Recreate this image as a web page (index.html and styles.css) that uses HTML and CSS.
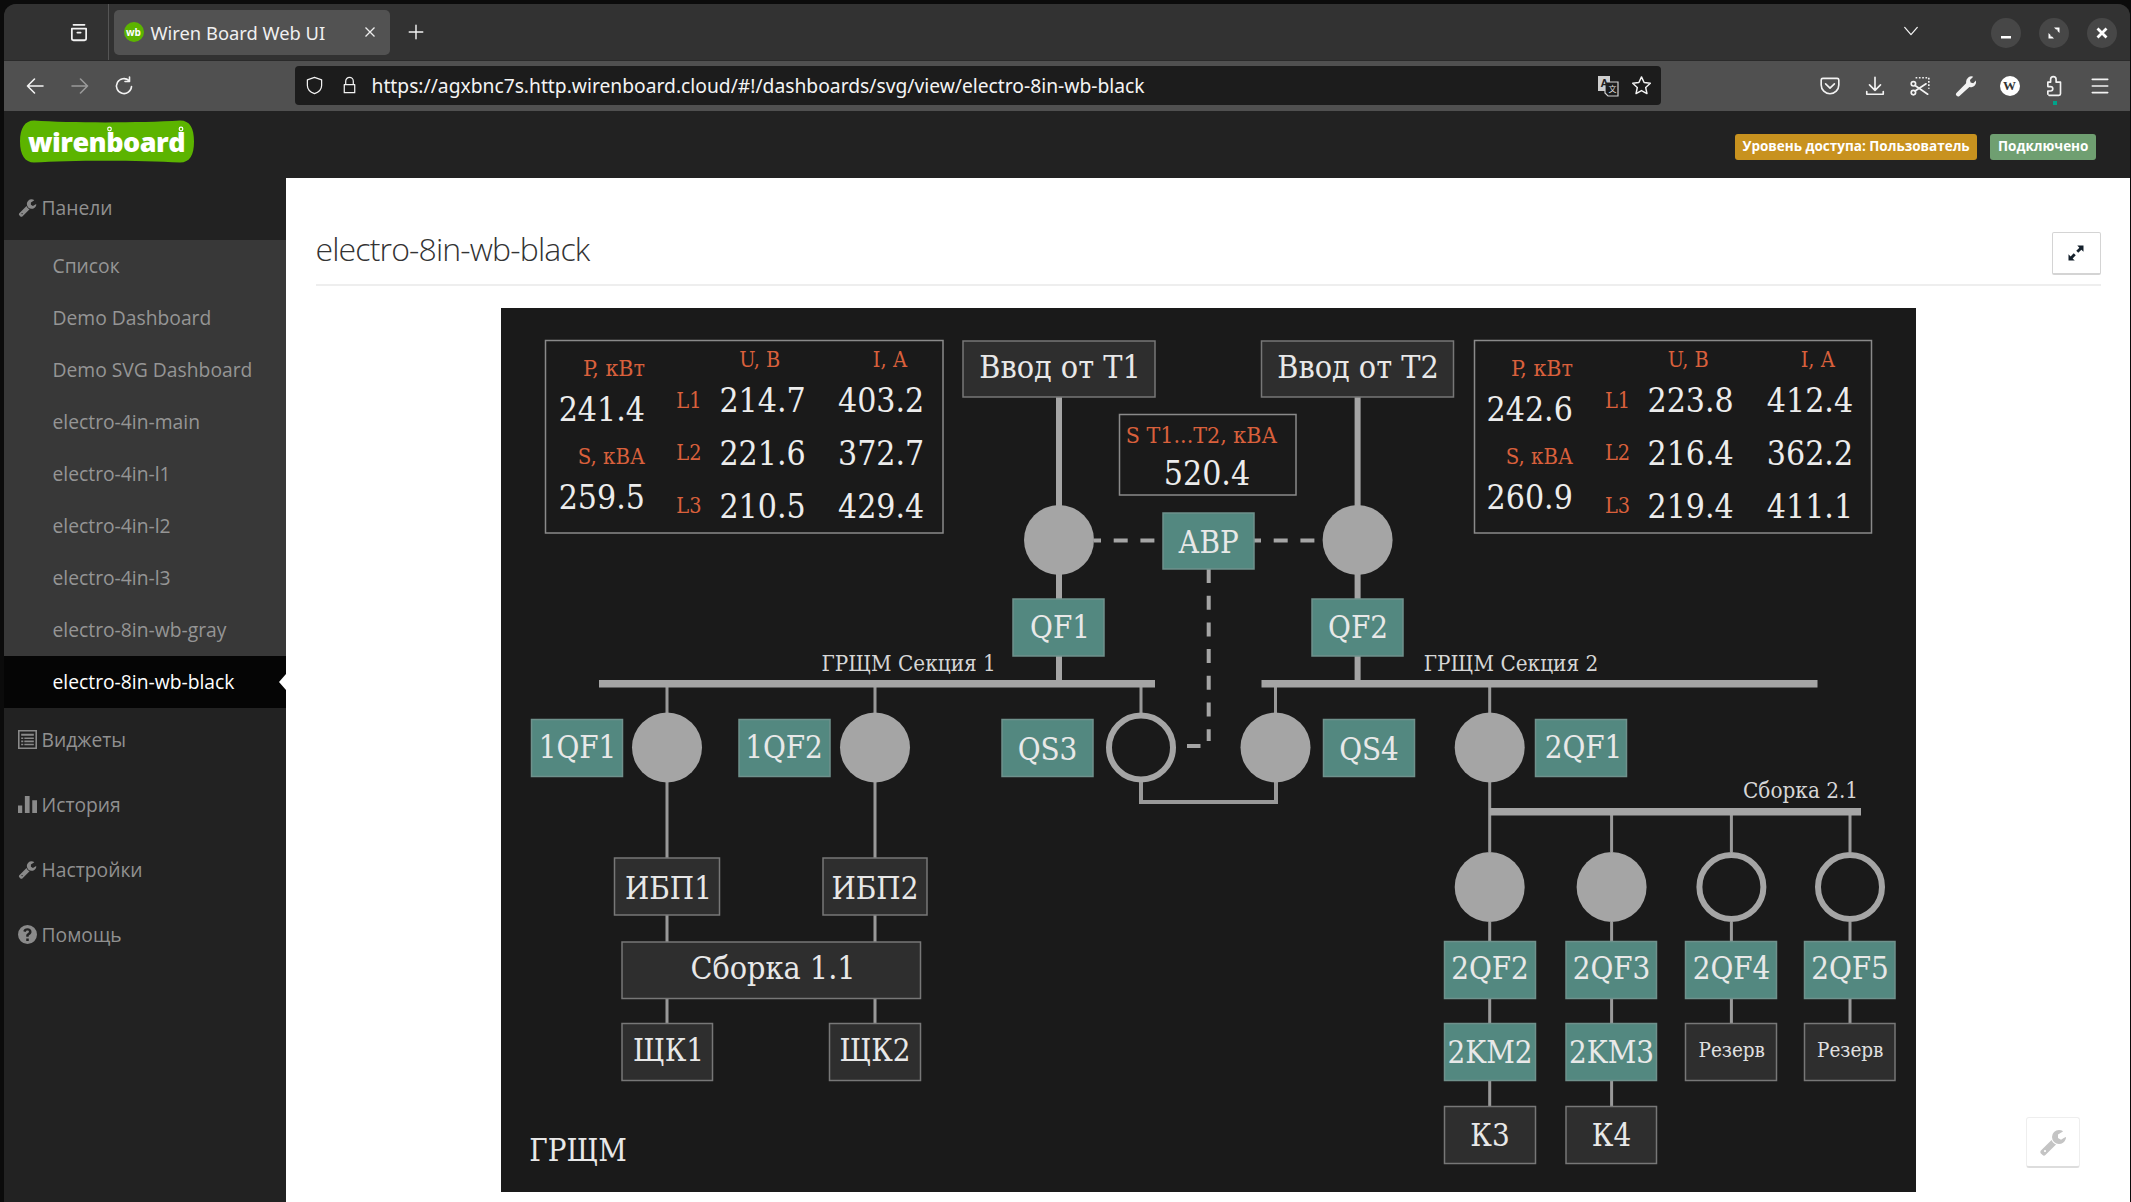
FILE: index.html
```html
<!DOCTYPE html>
<html lang="ru">
<head>
<meta charset="utf-8">
<title>Wiren Board Web UI</title>
<link rel="stylesheet" href="styles.css">
</head>
<body>
<svg class="defs" width="0" height="0" aria-hidden="true">
  <symbol id="wrench" viewBox="0 0 1792 1792"><path fill="currentColor" d="M448 1472q0-26-19-45t-45-19-45 19-19 45 19 45 45 19 45-19 19-45zm644-420l-682 682q-37 37-90 37-52 0-91-37l-106-108q-38-36-38-90 0-53 38-91l681-681q39 98 114.5 173.5t173.5 114.5zm634-435q0 39-23 106-47 134-164.5 217.5t-258.5 83.5q-185 0-316.5-131.5t-131.5-316.5 131.5-316.5 316.5-131.5q58 0 121.5 16.5t107.5 46.5q16 11 16 28t-16 28l-293 169v224l193 107q5-3 79-48.5t135.5-81 70.5-35.5q15 0 23.5 10t8.5 25z"/></symbol>
</svg>
<div class="window">
  <div class="titlebar">
    <div class="tabs-btn">
      <svg class="ff" viewBox="0 0 20 20"><path d="M5 3.500h10M3.500 7h13v9a1.500 1.500 0 0 1-1.500 1.500h-10a1.500 1.500 0 0 1-1.500-1.500zM8.500 10.500h3"/></svg>
    </div>
    <div class="tab">
      <span class="favicon">wb</span>
      <span class="tab-title">Wiren Board Web UI</span>
      <svg class="tab-x" viewBox="0 0 12 12"><path d="M1.500 1.500l9 9M10.500 1.500l-9 9"/></svg>
    </div>
    <svg class="ff plus" viewBox="0 0 20 20"><path d="M10 2.500v15M2.500 10h15"/></svg>
    <div class="spacer"></div>
    <svg class="ff chevron" viewBox="0 0 20 20"><path d="M3 6l7 8 7-8"/></svg>
    <div class="winbtns">
      <div class="winbtn"><svg viewBox="0 0 14 14"><path class="wb-solid" d="M2 10h10v2.500H2z"/></svg></div>
      <div class="winbtn"><svg viewBox="0 0 14 14"><path class="wb-solid" d="M7 1.500h5.500V7L10.500 5V3.500H9zM1.500 7L3.500 9v1.500H5L7 12.500H1.500z"/></svg></div>
      <div class="winbtn"><svg viewBox="0 0 14 14"><path class="wb-cross" d="M2.500 2.500l9 9M11.500 2.500l-9 9"/></svg></div>
    </div>
  </div>
  <div class="toolbar">
    <svg class="ff nav" viewBox="0 0 20 20"><path d="M18 10H2.500M9.500 3l-7 7 7 7"/></svg>
    <svg class="ff nav dim" viewBox="0 0 20 20"><path d="M2 10h15.500M10.500 3l7 7-7 7"/></svg>
    <svg class="ff nav" viewBox="0 0 20 20"><path d="M17.500 10.500a7.500 7.500 0 1 1-2.500-6M15.500 1v4.500H11"/></svg>
    <div class="urlbar">
      <svg class="ff small" viewBox="0 0 20 20"><path d="M10 1.500l7.500 2.500v6c0 4-3 7-7.500 8.500C5.500 17 2.500 14 2.500 10V4z"/></svg>
      <svg class="ff small lock" viewBox="0 0 20 20"><path d="M6 9V5.500a4 4 0 0 1 8 0V9M4.500 9h11v8.500h-11z"/></svg>
      <span class="url">https://agxbnc7s.http.wirenboard.cloud/#!/dashboards/svg/view/electro-8in-wb-black</span>
      <svg class="translate" viewBox="0 0 22 22"><path class="tr-back" d="M1 1h12v15H1z"/><path class="tr-front" d="M8 7h13v14H11l-3-3z"/><text class="tr-a" x="3.500" y="12">A</text><text class="tr-b" x="11.500" y="17">文</text></svg>
      <svg class="ff small star" viewBox="0 0 20 20"><path d="M10 1.800l2.500 5.400 5.900.7-4.400 4 1.200 5.800L10 14.800l-5.200 2.900L6 11.900l-4.400-4 5.900-.7z"/></svg>
    </div>
    <div class="tools">
      <svg class="ff tool" viewBox="0 0 20 20"><path d="M3.500 3h13A1.500 1.500 0 0 1 18 4.500V9a8 8 0 0 1-16 0V4.500A1.500 1.500 0 0 1 3.500 3zM6 8l4 4 4-4"/></svg>
      <svg class="ff tool" viewBox="0 0 20 20"><path d="M10 2v12M5 9l5 5 5-5M2.500 15v2.500h15V15"/></svg>
      <svg class="ff tool" viewBox="0 0 20 20"><path class="dots" d="M6 2.500h12v10"/><circle cx="4" cy="16" r="2"/><circle cx="4" cy="8" r="2"/><path d="M5.500 9.500l11.500 8M5.500 14.500l10-6.500"/></svg>
      <svg class="tool wrench-ff" viewBox="0 0 20 20"><path d="M11 6.500a5 5 0 0 1 6.500-5l-3 3 .6 2.400 2.400.6 2.500-2.500a5 5 0 0 1-6 6L5 19a1.800 1.800 0 0 1-2.600-.1 1.800 1.800 0 0 1-.2-2.500L11 7.500z"/></svg>
      <div class="wiki">W</div>
      <div class="ext-wrap">
        <svg class="ff tool" viewBox="0 0 20 20"><path d="M4.500 18.500h9a1.500 1.500 0 0 0 1.500-1.500V6.500h-4V4a2.500 2.500 0 0 0-5 0v2.500H3.500v4H6a2 2 0 0 1 0 4H3.500v3"/></svg>
        <span class="ext-dot"></span>
      </div>
      <svg class="ff tool" viewBox="0 0 20 20"><path d="M3 4h14M3 10h14M3 16h14"/></svg>
    </div>
  </div>
  <header class="apphead">
    <div class="logo">
      <svg class="logo-blob" viewBox="0 0 174 43" width="174" height="43">
        <path class="logo-bg" d="M14 .5C50 3 120 3 160 .5 170 .5 174 8 174 21.500 174 35 170 42.500 160 42.500 120 40 50 40 14 42.500 5 42.500 0 35 0 21.500 0 8 5 .5 14 .5z"/>
        <circle class="logo-dot" cx="89.500" cy="9" r="1.800"/>
        <circle class="logo-dot" cx="161" cy="9" r="1.800"/>
      </svg>
      <span class="logo-text">wirenboard</span>
    </div>
    <div class="badges">
      <span class="badge access">Уровень доступа: Пользователь</span>
      <span class="badge online">Подключено</span>
    </div>
  </header>
  <div class="main">
    <nav class="sidebar">
      <a class="nav-top first"><svg class="nav-icon"><use href="#wrench"/></svg>Панели</a>
      <div class="submenu">
        <a class="sub">Список</a>
        <a class="sub">Demo Dashboard</a>
        <a class="sub">Demo SVG Dashboard</a>
        <a class="sub">electro-4in-main</a>
        <a class="sub">electro-4in-l1</a>
        <a class="sub">electro-4in-l2</a>
        <a class="sub">electro-4in-l3</a>
        <a class="sub">electro-8in-wb-gray</a>
        <a class="sub active">electro-8in-wb-black</a>
      </div>
      <a class="nav-top"><svg class="nav-icon" viewBox="0 0 18 18"><path fill="currentColor" fill-rule="evenodd" d="M0 0h18v18H0zM1.500 1.500v15h15v-15zM3 3.500h12v2H3zM3 7h2v1.500H3zM6 7h9v1.500H6zM3 10h2v1.500H3zM6 10h9v1.500H6zM3 13h2v1.500H3zM6 13h9v1.500H6z"/></svg>Виджеты</a>
      <a class="nav-top"><svg class="nav-icon" viewBox="0 0 18 18"><path fill="currentColor" d="M0 10h4v7H0zM6.500 1h4.500v16H6.500zM13.500 5H18v12h-4.500z"/></svg>История</a>
      <a class="nav-top"><svg class="nav-icon"><use href="#wrench"/></svg>Настройки</a>
      <a class="nav-top"><svg class="nav-icon" viewBox="0 0 18 18"><path fill="currentColor" fill-rule="evenodd" d="M9 0a9 9 0 1 1 0 18A9 9 0 0 1 9 0zM7.800 12.800v2.400h2.400v-2.400zM9 3C6.800 3 5.400 4.100 5 6l2.200.6C7.400 5.600 8 5.100 8.900 5.100c.9 0 1.500.5 1.500 1.200 0 .6-.4 1-1.200 1.500-1 .7-1.400 1.300-1.400 2.500v.9h2.300v-.6c0-.6.200-.8 1-1.400 1.100-.8 1.700-1.600 1.700-2.900C12.800 4.300 11.200 3 9 3z"/></svg>Помощь</a>
    </nav>
    <main class="content">
      <div class="page-head">
        <h1 class="page-title">electro-8in-wb-black</h1>
        <button class="expand" type="button" aria-label="Fullscreen"><svg viewBox="0 0 16 16"><path d="M9 2h5v5l-1.700-1.700L9.800 7.800 8.200 6.200l2.500-2.500zM7 14H2V9l1.700 1.700 2.500-2.500 1.600 1.600-2.500 2.500z"/></svg></button>
      </div>
      <div class="diagram-wrap">
        <svg class="diagram" viewBox="501 308 1415 884" width="1415" height="884">
          <g class="w6">
            <path d="M1059 397V599M1059 656V681M1357.600 397V599M1357.600 656V681"/>
          </g>
          <g class="w3">
            <path d="M667 687V858M667 915V942M667 998V1023M875 687V858M875 915V942M875 998V1023"/>
            <path d="M1141 687V713M1275.500 687V713M1489.700 687V852M1611.600 815V852M1731.400 815V852M1850 815V852"/>
            <path d="M1489.700 922V942M1611.600 922V942M1731.400 922V942M1850 922V942"/>
            <path d="M1489.700 998V1024M1611.600 998V1024M1731.400 998V1024M1850 998V1024"/>
            <path d="M1489.700 1080V1107M1611.600 1080V1107"/>
          </g>
          <path class="w4" d="M1141 782V802H1276V782"/>
          <g class="dash">
            <path class="dash-off" d="M1094 540.500H1163"/>
            <path class="dash-off" d="M1254 540.500H1322"/>
            <path d="M1208.700 569V741"/>
            <path d="M1187 746H1200.500"/>
          </g>
          <rect class="bus" x="599" y="680" width="556" height="7.500"/>
          <rect class="bus" x="1261.500" y="680" width="556" height="7.500"/>
          <rect class="bus" x="1489.700" y="808" width="371.300" height="7.500"/>

          <circle class="on" cx="1059" cy="540" r="35"/>
          <circle class="on" cx="1357.600" cy="540" r="35"/>
          <circle class="on" cx="667" cy="747.500" r="35"/>
          <circle class="on" cx="875" cy="747.500" r="35"/>
          <circle class="off" cx="1141" cy="747.500" r="32"/>
          <circle class="on" cx="1275.500" cy="747.500" r="35"/>
          <circle class="on" cx="1489.700" cy="747.500" r="35"/>
          <circle class="on" cx="1489.700" cy="887" r="35"/>
          <circle class="on" cx="1611.600" cy="887" r="35"/>
          <circle class="off" cx="1731.400" cy="887" r="32"/>
          <circle class="off" cx="1850" cy="887" r="32"/>

          <rect class="frame" x="545.500" y="340.500" width="397.500" height="192.500"/>
          <rect class="frame" x="1474.500" y="340.500" width="397" height="192.500"/>
          <rect class="frame" x="1119.500" y="414.500" width="176.500" height="80.500"/>

          <rect class="dark" x="963" y="341" width="192" height="56"/>
          <rect class="dark" x="1261.500" y="341" width="192" height="56"/>
          <rect class="dark" x="614.500" y="858" width="105" height="57"/>
          <rect class="dark" x="823" y="858" width="104" height="57"/>
          <rect class="dark" x="622" y="942" width="298.500" height="56.500"/>
          <rect class="dark" x="622" y="1023.500" width="90.500" height="57"/>
          <rect class="dark" x="829.500" y="1023.500" width="91" height="57"/>
          <rect class="dark" x="1685.500" y="1023.500" width="91" height="57"/>
          <rect class="dark" x="1804.500" y="1023.500" width="90.500" height="57"/>
          <rect class="dark" x="1444.500" y="1106.500" width="91" height="57"/>
          <rect class="dark" x="1566" y="1106.500" width="90.500" height="57"/>

          <rect class="teal" x="1163" y="513" width="91" height="56"/>
          <rect class="teal" x="1013" y="599" width="91" height="57"/>
          <rect class="teal" x="1312" y="599" width="91" height="57"/>
          <rect class="teal" x="531.500" y="719.500" width="91" height="57"/>
          <rect class="teal" x="739" y="719.500" width="91" height="57"/>
          <rect class="teal" x="1002" y="719.500" width="91" height="57"/>
          <rect class="teal" x="1323.500" y="719.500" width="91" height="57"/>
          <rect class="teal" x="1535.500" y="719.500" width="91" height="57"/>
          <rect class="teal" x="1444.500" y="941.500" width="91" height="57"/>
          <rect class="teal" x="1566" y="941.500" width="90.500" height="57"/>
          <rect class="teal" x="1685.500" y="941.500" width="91" height="57"/>
          <rect class="teal" x="1804.500" y="941.500" width="90.500" height="57"/>
          <rect class="teal" x="1444.500" y="1023.500" width="91" height="57"/>
          <rect class="teal" x="1566" y="1023.500" width="90.500" height="57"/>

          <g class="lbl end">
            <text class="lbl-p" x="645" y="376">P, кВт</text>
            <text class="lbl-s" x="645" y="464">S, кВА</text>
            <text class="lbl-p" x="1573" y="376">P, кВт</text>
            <text class="lbl-s" x="1573" y="464">S, кВА</text>
          </g>
          <g class="lbl">
            <text x="739.300" y="366.700">U, В</text>
            <text x="872.800" y="366.700">I, А</text>
            <text x="1667.800" y="366.700">U, В</text>
            <text x="1800.700" y="366.700">I, А</text>
            <text x="676.300" y="407.700">L1</text>
            <text x="676.300" y="460">L2</text>
            <text x="676.300" y="513.300">L3</text>
            <text x="1604.900" y="407.700">L1</text>
            <text x="1604.900" y="460">L2</text>
            <text x="1604.900" y="513.300">L3</text>
            <text class="lbl-p" x="1125.800" y="442.500">S Т1...Т2, кВА</text>
          </g>
          <g class="val">
            <text x="558.700" y="421">241.4</text>
            <text x="558.700" y="509">259.5</text>
            <text x="719.400" y="412">214.7</text>
            <text x="838" y="412">403.2</text>
            <text x="719.400" y="465">221.6</text>
            <text x="838" y="465">372.7</text>
            <text x="719.400" y="518">210.5</text>
            <text x="838" y="518">429.4</text>
            <text x="1486.600" y="421">242.6</text>
            <text x="1486.600" y="509">260.9</text>
            <text x="1647.500" y="412">223.8</text>
            <text x="1766.800" y="412">412.4</text>
            <text x="1647.500" y="465">216.4</text>
            <text x="1766.800" y="465">362.2</text>
            <text x="1647.500" y="518">219.4</text>
            <text x="1766.800" y="518">411.1</text>
            <text x="1163.800" y="485">520.4</text>
          </g>
          <g class="name">
            <text class="wide" x="1060" y="378.300">Ввод от Т1</text>
            <text class="wide" x="1358" y="378.300">Ввод от Т2</text>
            <text x="1208.500" y="552.700">АВР</text>
            <text x="1060" y="637.700">QF1</text>
            <text x="1358" y="637.700">QF2</text>
            <text x="577.500" y="758.300">1QF1</text>
            <text x="784" y="758.300">1QF2</text>
            <text x="1047.500" y="759.500">QS3</text>
            <text x="1369" y="759.500">QS4</text>
            <text x="1583.500" y="758.300">2QF1</text>
            <text x="668.500" y="898.700">ИБП1</text>
            <text x="875" y="898.700">ИБП2</text>
            <text class="wide" x="773" y="979.300">Сборка 1.1</text>
            <text x="668.500" y="1061">ЩК1</text>
            <text x="875" y="1061">ЩК2</text>
            <text x="1490" y="979.300">2QF2</text>
            <text x="1611.500" y="979.300">2QF3</text>
            <text x="1731.500" y="979.300">2QF4</text>
            <text x="1850" y="979.300">2QF5</text>
            <text x="1490" y="1063">2KM2</text>
            <text x="1611.500" y="1063">2KM3</text>
            <text x="1490" y="1146">К3</text>
            <text x="1611.500" y="1146">К4</text>
            <text x="578" y="1161">ГРЩМ</text>
          </g>
          <g class="cap">
            <text x="821.400" y="671">ГРЩМ Секция 1</text>
            <text x="1423.800" y="671">ГРЩМ Секция 2</text>
            <text x="1743" y="797.500">Сборка 2.1</text>
            <text class="cap-small" x="1698.500" y="1056.700">Резерв</text>
            <text class="cap-small" x="1817" y="1056.700">Резерв</text>
          </g>
        </svg>
      </div>
      <button class="fab" type="button" aria-label="Edit"><svg><use href="#wrench"/></svg></button>
    </main>
  </div>
</div>
</body>
</html>
```

FILE: styles.css
```css
* { box-sizing: border-box; }
html, body { margin: 0; height: 100%; overflow: hidden; }
body { background: #0b0b0b; font-family: "Open Sans", sans-serif; }
.defs { position: absolute; }

.window {
  height: 1202px;
  margin: 4px 1.500px 0 4px;
  display: flex;
  flex-direction: column;
  border-radius: 12px 12px 0 0;
  overflow: hidden;
  background: #222;
}

/* Browser chrome */
.titlebar {
  height: 56px;
  flex: none;
  background: #323232;
  display: flex;
  align-items: center;
  color: #f0f0f0;
  font-family: "Noto Sans", sans-serif;
}
.ff { fill: none; stroke: #f2f2f2; stroke-width: 1.600; stroke-linecap: round; stroke-linejoin: round; flex: none; }
.tabs-btn { width: 104.500px; height: 56px; border-right: 1px solid #555; display: flex; align-items: center; justify-content: flex-end; padding-right: 18px; flex: none; }
.tabs-btn .ff { width: 22px; height: 22px; }
.tab {
  margin-left: 5px;
  width: 276px;
  height: 45px;
  background: #525252;
  border-radius: 5px;
  display: flex;
  align-items: center;
  padding: 0 10px;
  flex: none;
}
.favicon { width: 20px; height: 20px; border-radius: 50%; background: #5cb400; color: #fff; font: 700 10px/20px "Open Sans", sans-serif; text-align: center; flex: none; }
.tab-title { margin-left: 7px; font-size: 18.350px; flex: 1; white-space: nowrap; padding-top: 1px; }
.tab-x { width: 12px; height: 12px; fill: none; stroke: #eee; stroke-width: 1.300; margin-right: 4px; }
.plus { width: 18px; height: 18px; margin-left: 17px; }
.spacer { flex: 1; }
.chevron { width: 18px; height: 18px; margin-right: 71.500px; margin-top: -2px; stroke-width: 1.400; }
.winbtns { display: flex; gap: 17.700px; margin: 2px 13px 0 0; }
.winbtn { width: 30px; height: 30px; border-radius: 50%; background: #474747; display: flex; align-items: center; justify-content: center; }
.winbtn svg { width: 14px; height: 14px; }
.wb-solid { fill: #fff; }
.wb-cross { stroke: #fff; stroke-width: 2.800; fill: none; }

.toolbar {
  height: 51px;
  flex: none;
  background: #505050;
  border-top: 1px solid #2a2a2a;
  display: flex;
  align-items: center;
  padding: 0 0 1px 21px;
}
.nav { width: 20px; height: 20px; margin-right: 24.500px; }
.dim { opacity: .45; }
.urlbar {
  margin-left: 136px;
  width: 1366px;
  height: 39px;
  background: #1c1c1c;
  border-radius: 4px;
  display: flex;
  align-items: center;
  padding: 0 9px 0 10px;
  color: #f4f4f4;
  flex: none;
}
.small { width: 19px; height: 19px; stroke-width: 1.300; }
.lock { margin-left: 16px; }
.url { margin-left: 13px; font: 400 19.250px "Noto Sans", sans-serif; white-space: nowrap; flex: 1; margin-top: -1px; }
.translate { width: 22px; height: 22px; flex: none; }
.tr-back { fill: #cfcfcf; }
.tr-front { fill: #1c1c1c; stroke: #d0d0d0; stroke-width: 1.200; }
.tr-a { font: 700 11px "Liberation Sans", sans-serif; fill: #222; }
.tr-b { font: 8px "Noto Sans CJK SC", sans-serif; fill: #ddd; }
.star { width: 21px; height: 21px; margin-left: 12px; stroke-width: 1.400; }
.tools { display: flex; align-items: center; gap: 23px; margin-left: 158px; }
.tool { width: 22px; height: 22px; stroke-width: 1.500; display: block; flex: none; }
.dots { stroke-dasharray: 1.500 1.500; stroke-linecap: butt; }
.wrench-ff { fill: #f2f2f2; }
.wiki { width: 20px; height: 20px; border-radius: 50%; background: #fff; color: #333; font: 700 13px/20px "Liberation Serif", serif; text-align: center; flex: none; margin: 0 1px; }
.ext-wrap { position: relative; height: 22px; }
.ext-dot { position: absolute; left: 9px; top: 26px; width: 4px; height: 4px; background: #00a38a; }

/* App header */
.apphead {
  height: 67px;
  flex: none;
  background: #222;
  display: flex;
  align-items: flex-start;
  justify-content: space-between;
  padding: 9px 33.500px 0 15.500px;
}
.logo { position: relative; width: 174px; height: 43px; flex: none; display: flex; align-items: center; justify-content: center; }
.logo-blob { position: absolute; left: 0; top: 0; }
.logo-bg { fill: #5cb400; }
.logo-text { position: relative; color: #fff; font: 800 27px/43px "Open Sans", sans-serif; letter-spacing: -.500px; }
.logo-dot { fill: #5cb400; stroke: #fff; stroke-width: 1.200; }
.badges { display: flex; gap: 13px; margin-top: 13.500px; }
.badge { height: 26px; border-radius: 3px; color: #fff; font: 700 13.500px/25px "Open Sans", sans-serif; padding: 0 8px; white-space: nowrap; }
.access { background: #c8921f; width: 242.500px; }
.online { background: #6f9f71; width: 106px; }

/* Sidebar */
.main { flex: 1; display: flex; min-height: 0; }
.sidebar { width: 282px; flex: none; background: #222; display: flex; flex-direction: column; }
.nav-top { height: 65px; display: flex; align-items: center; padding: 0 0 2px 13.500px; color: #909090; font-size: 19.300px; }
.first { height: 62px; padding-bottom: 4px; }
.nav-icon { width: 19px; height: 19px; margin-right: 5px; flex: none; color: #8a8a8a; }
.submenu { background: #383838; }
.sub { display: flex; align-items: center; height: 52px; padding: 0 0 2px 48.500px; color: #959595; font-size: 19.300px; position: relative; }
.active { background: #050505; color: #fff; }
.active::after {
  content: "";
  position: absolute;
  right: 0;
  top: 18px;
  border: 8px solid transparent;
  border-right-color: #fff;
  border-left-width: 0;
  border-right-width: 7px;
}

/* Content */
.content { flex: 1; background: #fff; position: relative; padding: 0 29px 0 29.500px; }
.page-head { height: 108px; border-bottom: 2px solid #eee; display: flex; align-items: flex-start; justify-content: space-between; padding-top: 54px; }
.page-title { margin: -5px 0 0; font: 300 32px/44px "Open Sans", sans-serif; color: #333; letter-spacing: -.850px; white-space: nowrap; }
.expand { width: 49px; height: 42.500px; background: #fff; border: 1px solid #d4d4d4; border-bottom-width: 2px; border-radius: 2px; padding: 0; display: flex; align-items: center; justify-content: center; }
.expand svg { width: 20px; height: 20px; fill: #14202c; }
.diagram-wrap { display: flex; justify-content: center; padding-top: 22px; margin-right: -1px; }
.diagram { display: block; background: #1a1a1a; flex: none; }
.diagram text { font-family: "DejaVu Serif Condensed", "DejaVu Serif", serif; }

.w6 path { stroke: #a5a5a5; stroke-width: 6; fill: none; }
.w3 path { stroke: #999; stroke-width: 3; fill: none; }
.w4 { stroke: #999; stroke-width: 4; fill: none; }
.dash path { stroke: #a5a5a5; stroke-width: 4; fill: none; stroke-dasharray: 14 12.700; }
.dash .dash-off { stroke-dashoffset: 7; }
.bus { fill: #a5a5a5; }
.on { fill: #a5a5a5; }
.off { fill: #1a1a1a; stroke: #a5a5a5; stroke-width: 6; }
.frame { fill: #1a1a1a; stroke: #8a8a8a; stroke-width: 1.500; }
.dark { fill: #2e2e2e; stroke: #777; stroke-width: 1.500; }
.teal { fill: #538880; stroke: #6f918c; stroke-width: 1.500; }
.lbl text { fill: #d9603c; font-size: 21.500px; }
.lbl .lbl-p { font-size: 23px; }
.lbl .lbl-s { font-size: 22px; }
.lbl.end text { text-anchor: end; }
.val text { fill: #ececec; font-size: 33.500px; }
.name text { fill: #e8e8e8; font-size: 31px; text-anchor: middle; }
.name .wide { font-size: 32px; }
.cap text { fill: #d6d6d6; font-size: 22.300px; }
.cap .cap-small { font-size: 20.500px; fill: #e0e0e0; }

.fab { position: absolute; right: 50px; top: 938.700px; width: 54px; height: 51px; background: #fff; border: 1px solid #eee; border-bottom: 2px solid #ddd; border-radius: 3px; padding: 0; display: flex; align-items: center; justify-content: center; }
.fab svg { width: 28px; height: 28px; color: #c4c4c4; }
```
